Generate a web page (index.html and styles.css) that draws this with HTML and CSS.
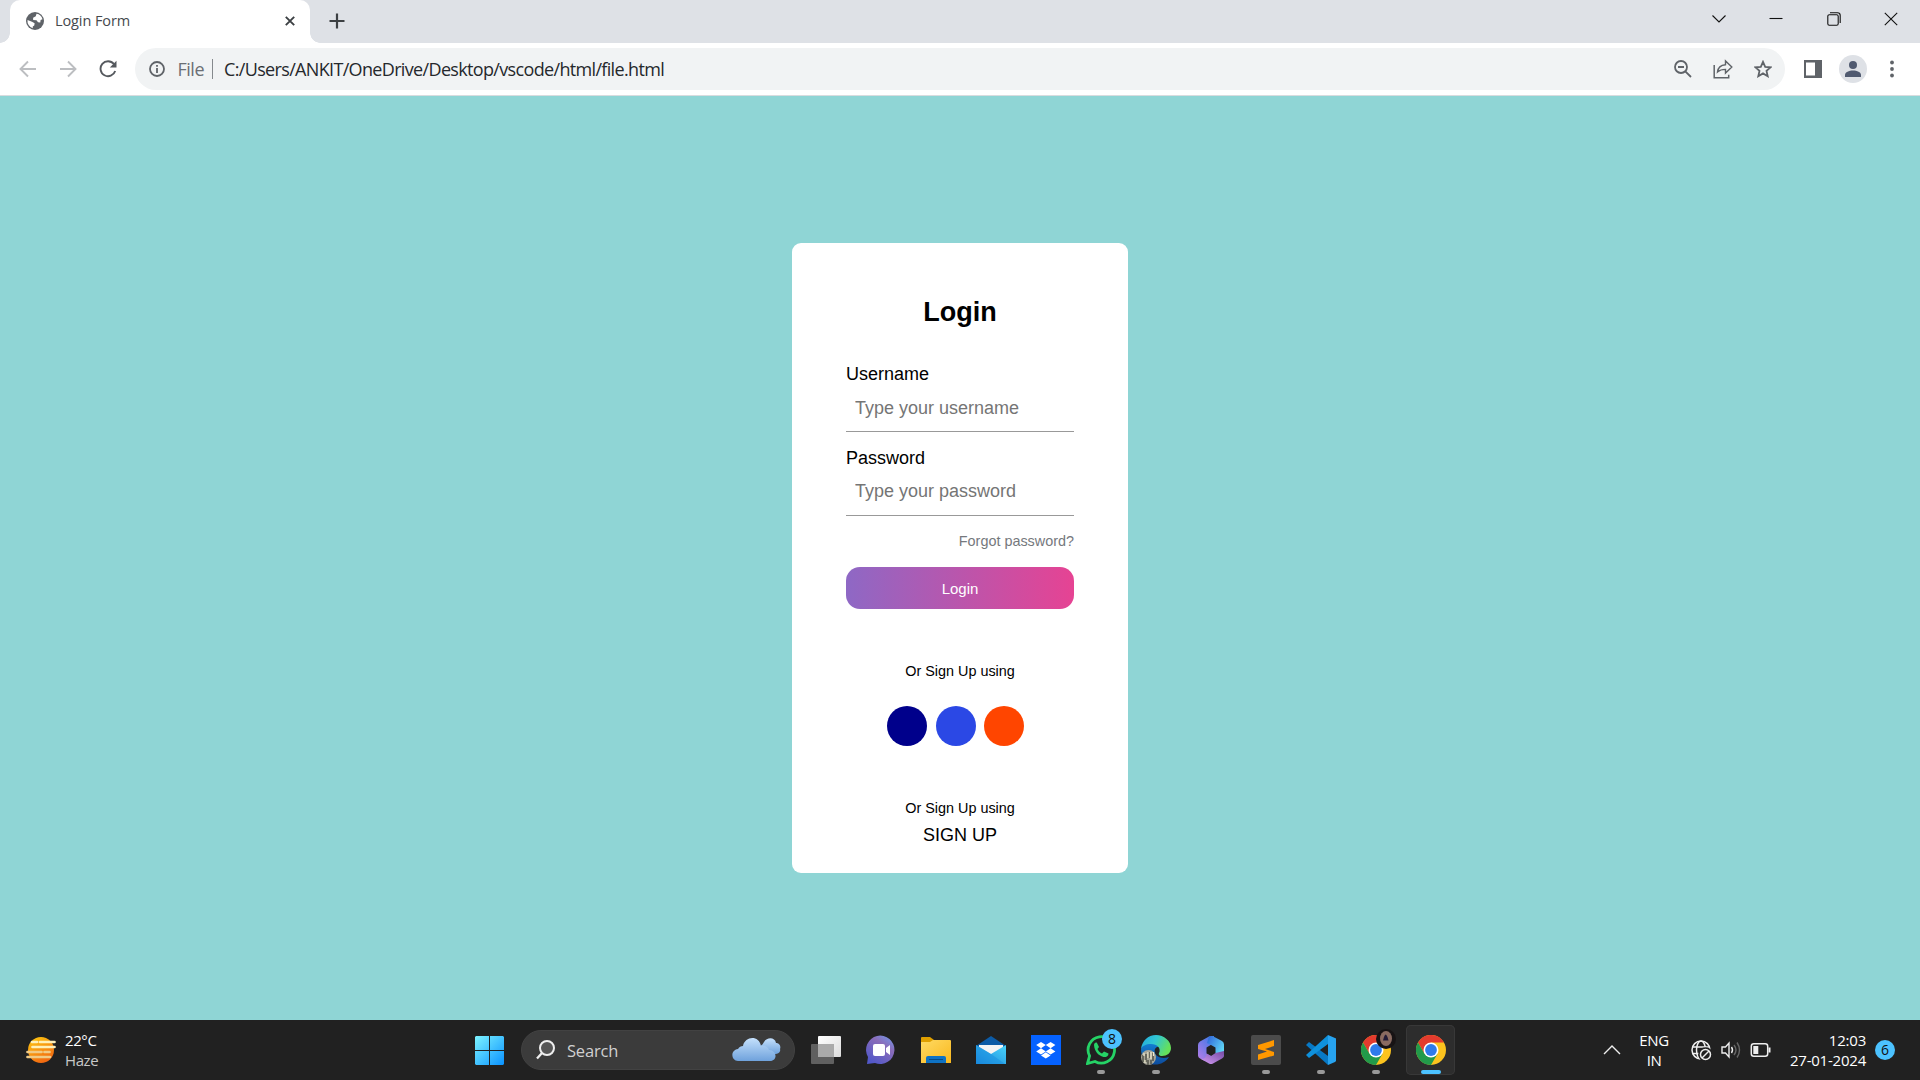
FILE: index.html
```html
<!DOCTYPE html>
<html lang="en">
<head>
<meta charset="utf-8">
<title>Login Form</title>
<link rel="stylesheet" href="styles.css">
</head>
<body>
<svg class="defs" width="0" height="0">
  <defs>
    <linearGradient id="win" x1="0" y1="0" x2="1" y2="1"><stop offset="0" stop-color="#7df4ff"/><stop offset="1" stop-color="#0a92ff"/></linearGradient>
    <linearGradient id="sun" x1="0" y1="0" x2=".5" y2="1"><stop offset="0" stop-color="#ffcd10"/><stop offset="1" stop-color="#f26a11"/></linearGradient>
    <linearGradient id="cloud" x1="0" y1="0" x2="0" y2="1"><stop offset="0" stop-color="#c4e0fc"/><stop offset="1" stop-color="#6fa2dc"/></linearGradient>
    <linearGradient id="chat" x1="1" y1="0" x2=".3" y2="1"><stop offset="0" stop-color="#6f9ef0"/><stop offset=".4" stop-color="#8a6cb9"/><stop offset="1" stop-color="#5258c9"/></linearGradient>
    <linearGradient id="folder" x1="0" y1="0" x2="1" y2="1"><stop offset="0" stop-color="#ffda63"/><stop offset="1" stop-color="#f9b81e"/></linearGradient>
    <linearGradient id="mail" x1="0" y1="1" x2="1" y2="0"><stop offset="0" stop-color="#1a85da"/><stop offset="1" stop-color="#49d5fb"/></linearGradient>
    <linearGradient id="edgeTop" x1="0" y1="0" x2="1" y2=".4"><stop offset="0" stop-color="#21a8e0"/><stop offset=".5" stop-color="#31c6d3"/><stop offset="1" stop-color="#65e05a"/></linearGradient>
    <linearGradient id="edgeLow" x1="0" y1="0" x2="0" y2="1"><stop offset="0" stop-color="#1383d8"/><stop offset="1" stop-color="#0d4b9c"/></linearGradient>
    <linearGradient id="m1" x1=".8" y1="0" x2="0" y2="1"><stop offset="0" stop-color="#3f7ae6"/><stop offset="1" stop-color="#ba7ce8"/></linearGradient>
    <linearGradient id="m2" x1="0" y1="0" x2="1" y2=".7"><stop offset="0" stop-color="#2d60d8"/><stop offset="1" stop-color="#62dcf7"/></linearGradient>
    <linearGradient id="m3" x1="0" y1="1" x2="1" y2="0"><stop offset="0" stop-color="#d39bf3"/><stop offset="1" stop-color="#744aa4"/></linearGradient>
    <linearGradient id="pane" x1="0" y1="0" x2="1" y2="1"><stop offset="0" stop-color="#fff"/><stop offset="1" stop-color="#dcdcdc"/></linearGradient>
    <symbol id="chrome" viewBox="0 0 30 30">
      <circle cx="15" cy="15" r="15" fill="#fcc31e"/>
      <path d="M15 15 8.5 18.8 2 7.5A15 15 0 0 1 28 7.5H15z" fill="#e33b2e"/>
      <path d="M2 7.5A15 15 0 0 0 15 30L21.5 18.8 15 15 8.5 18.8z" fill="#229a4a"/>
      <circle cx="15" cy="15" r="7.5" fill="#fff"/><circle cx="15" cy="15" r="5.9" fill="#2f7bea"/>
    </symbol>
  </defs>
</svg>

<header class="tabstrip">
  <div class="tab">
    <svg class="favicon" viewBox="0 0 24 24"><circle cx="12" cy="12" r="12" fill="#5f6368"/><path d="M14 2.4 13 5.5 9.5 7.5v3L14 11l2 2.5 3 .5.5-3.5L22 9.5A10 10 0 0 0 14 2.4M2 10.5 8 13l3.500 2-.5 3-2 1.200v2.300A10.300 10.300 0 0 1 2 10.500" fill="#fff"/></svg>
    <span class="tab-title">Login Form</span>
    <svg class="tab-close" viewBox="0 0 10 10"><path d="M.8.8l8.400 8.400M9.200.8.8 9.200" stroke="#3c4043" stroke-width="1.900"/></svg>
  </div>
  <svg class="new-tab" viewBox="0 0 16 16"><path d="M8 .5v15M.5 8h15" stroke="#3c4043" stroke-width="2.200"/></svg>
  <div class="window-controls">
    <svg width="14" height="14" viewBox="0 0 14 14"><path d="m.5 3.500 6.500 6.500 6.500-6.500"/></svg>
    <svg width="14" height="14" viewBox="0 0 14 14"><path d="M.5 6.500h13"/></svg>
    <svg width="14" height="14" viewBox="0 0 14 14"><rect x=".8" y="2.800" width="10.400" height="10.400" rx="1.500"/><path d="M3 .8h7.500a2.700 2.700 0 0 1 2.700 2.700V11"/></svg>
    <svg width="14" height="14" viewBox="0 0 14 14"><path d="m.8.8 12.400 12.400M13.200.8.8 13.200"/></svg>
  </div>
</header>

<nav class="toolbar">
  <div class="nav-buttons">
    <svg width="18" height="18" viewBox="0 0 18 18" stroke="#bcbec1"><path d="M17 9H2M9 1.500 1.500 9 9 16.500"/></svg>
    <svg width="18" height="18" viewBox="0 0 18 18" stroke="#bcbec1"><path d="M1 9h15M9 1.500 16.500 9 9 16.500"/></svg>
    <svg width="18" height="18" viewBox="0 0 18 18" stroke="#55595e"><path d="M14.900 4A7.500 7.500 0 1 0 16.200 11"/><path d="M17.500.8v6.700h-6.700z" fill="#55595e" stroke="none"/></svg>
  </div>
  <div class="omnibox">
    <svg class="info" width="16" height="16" viewBox="0 0 16 16"><circle cx="8" cy="8" r="7" fill="none" stroke="#5f6368" stroke-width="1.800"/><path d="M8 7v5M8 4v1.800" stroke="#5f6368" stroke-width="1.800"/></svg>
    <span class="scheme">File</span>
    <span class="divider"></span>
    <span class="url">C:/Users/ANKIT/OneDrive/Desktop/vscode/html/file.html</span>
    <div class="omni-actions">
      <svg width="18" height="18" viewBox="0 0 18 18"><circle cx="7" cy="7" r="6"/><path d="m11.300 11.300 5.700 5.700M4 7h6"/></svg>
      <svg width="20" height="20" viewBox="0 0 20 20"><path d="M1.200 6v12.700h14.500v-3" stroke-width="1.500"/><path d="M4.500 13c.5-4.500 3.500-7 8-7.300V2l6.300 6-6.300 6v-3.600c-3.500 0-6 .8-8 2.600z" stroke-width="1.400"/></svg>
      <svg width="18" height="18" viewBox="0 0 18 18"><path d="m9 1.800 2.200 5 5.300.5-4 3.600 1.200 5.300L9 13.400l-4.700 2.800 1.200-5.300-4-3.600 5.300-.5z"/></svg>
    </div>
  </div>
  <svg class="sidepanel" width="18" height="18" viewBox="0 0 18 18"><path fill-rule="evenodd" d="M0 0h18v18H0zM2 2.500h9v13H2z" fill="#5f6368"/></svg>
  <svg class="profile" width="28" height="28" viewBox="0 0 28 28"><circle cx="14" cy="14" r="14" fill="#dee1e6"/><circle cx="14" cy="10" r="4" fill="#505a70"/><path d="M6 22v-2c0-3 4-4.500 8-4.500s8 1.500 8 4.500v2z" fill="#505a70"/></svg>
  <svg class="menu" width="4" height="18" viewBox="0 0 4 18" fill="#5f6368"><circle cx="2" cy="2.500" r="1.900"/><circle cx="2" cy="9" r="1.900"/><circle cx="2" cy="15.500" r="1.900"/></svg>
</nav>

<main class="page">
  <form class="card">
    <h1>Login</h1>
    <label for="user">Username</label>
    <input id="user" type="text" placeholder="Type your username">
    <label for="pass">Password</label>
    <input id="pass" type="password" placeholder="Type your password">
    <a class="forgot">Forgot password?</a>
    <button type="button">Login</button>
    <p class="social-label">Or Sign Up using</p>
    <div class="social"><span class="dot navy"></span><span class="dot blue"></span><span class="dot orange"></span></div>
    <p class="signup-label">Or Sign Up using</p>
    <a class="signup">SIGN UP</a>
  </form>
</main>

<footer class="taskbar">
  <div class="weather">
    <svg width="30" height="28" viewBox="0 0 30 28"><circle cx="15" cy="14" r="13" fill="url(#sun)"/><g stroke-width="2.700" stroke-linecap="round"><path d="M6 6h5M14 6h14.500M6.500 11h22" stroke="#fff0b8"/><path d="M1.500 16h14M18.500 16h5M1.500 21h22.500" stroke="#f0ca85"/></g></svg>
    <div class="lines"><span>22°C</span><span class="dim">Haze</span></div>
  </div>

  <div class="apps">
    <svg class="start" width="29" height="29" viewBox="0 0 29 29"><path fill="url(#win)" d="M1 0h13v14H0V1zM15 0h13l1 1v13H15zM0 15h14v14H1l-1-1zM15 15h14v13l-1 1H15z"/></svg>
    <div class="search">
      <svg width="19" height="20" viewBox="0 0 19 20"><circle cx="11" cy="8" r="7" fill="#555" stroke="#eee" stroke-width="2"/><path d="m6 13-5 5.500" stroke="#eee" stroke-width="2.300"/></svg>
      <span>Search</span>
      <svg class="cloud" width="49" height="24" viewBox="0 0 49 24"><path d="M28 14V8c2-1 3-2 4-4 3-5 11-5 12 1 4 0 5 4 4 6 1 3-2 5-5 5z" fill="url(#cloud)"/><path d="M6 23C-1 23-2 12 6 11c1-2 3-3 5-3 2-10 16-11 18 0 4-1 7 1 8 4 8 0 9 11 1 11z" fill="url(#cloud)"/></svg>
    </div>
    <div class="app"><svg width="30" height="30" viewBox="0 0 30 30"><rect x="0" y="9" width="23" height="20" rx="1" fill="#606060"/><rect x="7" y="1" width="23" height="21" rx="1" fill="url(#pane)"/><path d="M7 9h16v13H7z" fill="#aaa"/></svg></div>
    <div class="app"><svg width="30" height="30" viewBox="0 0 30 30"><path d="M1 29 2 22A14.200 14.200 0 1 1 9 28z" fill="url(#chat)"/><rect x="7" y="9" width="12" height="12" rx="2" fill="#fff"/><path d="m20 13 4-3v10l-4-3z" fill="#fff"/></svg></div>
    <div class="app"><svg width="30" height="30" viewBox="0 0 30 30"><path d="M0 3q0-1 1-1h8l4 3v5H0z" fill="#e0a000"/><path d="M0 7h9l3-2h17q1 0 1 1v22H0z" fill="url(#folder)"/><path d="M5 28v-5q0-2 2-2h16q2 0 2 2v5z" fill="#0e72c4"/><path d="M8 24.500h14" stroke="#064b87"/></svg></div>
    <div class="app"><svg width="30" height="30" viewBox="0 0 30 30"><path d="M0 11 15 1l15 10v8H0z" fill="#0c5ba6"/><path d="M3 10h24v8L15 23 3 18z" fill="#f4f4f4"/><path d="m0 10 15 9 15-9v19H0z" fill="url(#mail)"/><path d="M15 19 0 10v19h29z" fill="#188ee0" opacity=".5"/></svg></div>
    <div class="app"><svg width="30" height="30" viewBox="0 0 30 30"><path fill="#0562ff" d="M0 0h30v30H0z"/><path fill="#fff" d="m10 7 4.800 3.100L10 13.200l-4.800-3.100zM19.600 7l4.800 3.100-4.800 3.100-4.800-3.100zM10 13.300l4.800 3.100L10 19.500l-4.800-3.100zM19.600 13.300l4.800 3.100-4.800 3.100-4.800-3.100zM14.800 17.300l4.800 3.100-4.800 3.100-4.800-3.100z"/></svg></div>
    <div class="app running"><svg width="30" height="30" viewBox="0 0 30 30"><path d="M1.500 28.500 3.600 21A13.200 13.200 0 1 1 9 26.500z" fill="none" stroke="#25d366" stroke-width="2.800"/><path d="M8 10c0-2 2-3 3-2l2 4-1.500 2c1 2.300 2.500 3.500 4.500 4.500l2-2 4.500 2c0 3-3 4-5 3.500C12 20.500 8.500 16 8 10z" fill="#25d366"/></svg><span class="badge">8</span></div>
    <div class="app running"><svg width="30" height="30" viewBox="0 0 30 30"><path d="M0 14C2 6 13 4 18 9l1 3c-5-1-7 4-4 8 3 3 8 4 13 2-4 6-11 9-18 7C4 27 0 22 0 14z" fill="url(#edgeLow)"/><path d="M0 14C1 6 7 0 15 0s15 6 15 13c0 5-4 8-9 8-3 0-4-2-2.500-4 1-4-2-8-8.500-8-5 0-9 2-10 5z" fill="url(#edgeTop)"/><circle cx="7.500" cy="22.500" r="7.500" fill="#a7a699"/><path d="M2 20v7M5 19v8M8 17v6M12 18v8M7 25v5M10 25v4" stroke="#45473e" stroke-width="1.300"/><path d="M3 18v3M7 17v6M10 17v7M4 25v3M12.500 17v4" stroke="#eee9cd" stroke-width="1.200"/></svg></div>
    <div class="app"><svg width="30" height="30" viewBox="0 0 30 30"><path d="M13 1.500 4 6.500Q2 7.700 2 10v10.500q0 2 2 3L9 26l6-5-4.500-2.500v-6L18 8V1z" fill="url(#m1)"/><path d="M13 1.500q2-1 4-.3L26 6q2 1 2 3.500v12l-8.500-3.500v-5.500L15 10l-4-2z" fill="url(#m2)"/><path d="M5 24q5.500 0 5.500-5.500L15 21l4.500-3L28 16v4.500q0 2-2 3l-9 5q-2 1-4 0z" fill="url(#m3)"/></svg></div>
    <div class="app running"><svg width="30" height="30" viewBox="0 0 30 30"><rect width="30" height="30" rx="2" fill="#4b4b4b"/><path fill="#ff9800" d="m7 10 16-5v6l-9 3 9 3v3.500L7 25v-5.500l9-3L7 14z"/></svg></div>
    <div class="app running"><svg width="30" height="30" viewBox="0 0 30 30"><path d="m0 10 3-3 19 14v9z" fill="#0879c5"/><path d="m0 20 3 3L22 9V0z" fill="#0f91dc"/><path d="m22 0 7 3q1 0 1 1v22l-1 1-7 3z" fill="#27a3ef"/></svg></div>
    <div class="app running"><svg width="30" height="30"><use href="#chrome"/></svg><svg class="avatar" width="20" height="20" viewBox="0 0 20 20"><circle cx="10" cy="10" r="10" fill="#171314"/><ellipse cx="10" cy="9.500" rx="6" ry="7.500" fill="#8a6b61"/><path d="M8 8q1.500-5 3.500 0l1 3.500H7z" fill="#231c38"/></svg></div>
    <div class="app active"><svg width="30" height="30"><use href="#chrome"/></svg></div>
  </div>

  <div class="tray">
    <svg width="18" height="10" viewBox="0 0 18 10"><path d="m1 9 8-8 8 8" fill="none" stroke="#eee" stroke-width="1.400"/></svg>
    <div class="lines lang"><span>ENG</span><span>IN</span></div>
    <div class="status">
      <svg width="21" height="21" viewBox="0 0 21 21" fill="none" stroke="#eee" stroke-width="1.500"><circle cx="10" cy="10" r="9"/><ellipse cx="10" cy="10" rx="4.500" ry="9"/><path d="M1.500 7h17M1.500 13.500h17"/><circle cx="14.500" cy="14.500" r="6.500" fill="#202020" stroke="#202020"/><circle cx="14.500" cy="14.500" r="5"/><path d="m11 18 7-7"/></svg>
      <svg width="20" height="18" viewBox="0 0 20 18" fill="none" stroke="#eee" stroke-width="1.400"><path d="M1 6h3.500L8 2v14l-3.500-4H1z"/><path d="M10.500 6q2 3 0 6"/><path d="M13 4q4 5 0 10M16 1.500q5 7.500 0 15" stroke="#666"/></svg>
      <svg width="21" height="14" viewBox="0 0 21 14"><rect x="1.300" y=".8" width="16.400" height="12.400" rx="2.500" fill="none" stroke="#eee" stroke-width="1.500"/><path d="M3.300 3h5v8h-5zM18.500 4.500h2v5h-2z" fill="#eee"/></svg>
    </div>
    <div class="lines clock"><span>12:03</span><span>27-01-2024</span></div>
    <span class="count">6</span>
  </div>
</footer>
</body>
</html>
```
FILE: styles.css
```css
* { box-sizing: border-box; }
body { margin: 0; width: 1920px; height: 1080px; display: flex; flex-direction: column; overflow: hidden; font-family: "Open Sans", "Noto Sans", sans-serif; }
svg { display: block; flex: none; }
.defs { position: absolute; }

.tabstrip { height: 43px; flex: none; display: flex; align-items: center; background: #dee1e6; padding-left: 10px; }
.tab { position: relative; width: 300px; height: 43px; display: flex; align-items: center; padding: 0 15px 1px 16px; background: #fff; border-radius: 10px 10px 0 0; }
.tab::before, .tab::after { content: ""; position: absolute; bottom: 0; width: 10px; height: 10px; }
.tab::before { left: -10px; background: radial-gradient(circle at 0 0, #dee1e6 9.500px, #fff 10px); }
.tab::after { right: -10px; background: radial-gradient(circle at 100% 0, #dee1e6 9.500px, #fff 10px); }
.favicon { width: 18px; height: 18px; }
.tab-title { margin-left: 11px; padding-bottom: 1px; font-size: 14.500px; letter-spacing: -.1px; color: #45494d; white-space: nowrap; }
.tab-close { width: 10px; height: 10px; margin-left: auto; }
.new-tab { width: 16px; height: 16px; margin: 0 0 1px 19px; }
.window-controls { margin-left: auto; display: flex; gap: 43.500px; padding: 0 22px 6px 0; fill: none; stroke: #111; stroke-width: 1.100; }

.toolbar { height: 53px; flex: none; display: flex; align-items: center; padding: 0 26px 0 19px; background: #fff; border-bottom: 1px solid #d9dcdf; }
.nav-buttons { width: 116px; display: flex; gap: 22px; fill: none; stroke-width: 1.900; }
.omnibox { width: 1650px; height: 42px; display: flex; align-items: center; padding: 0 13px 0 14px; border-radius: 21px; background: #f1f3f4; font-size: 18px; white-space: nowrap; }
.scheme { margin-left: 12.500px; padding-bottom: 1px; color: #6b6f74; letter-spacing: -.5px; }
.divider { width: 1px; height: 20px; margin: 0 11px 0 8px; background: #85898d; }
.url { padding-bottom: 1px; color: #25282c; letter-spacing: -.660px; }
.omni-actions { margin-left: auto; display: flex; align-items: center; gap: 21px; fill: none; stroke: #5f6368; stroke-width: 1.800; }
.sidepanel { margin-left: 18.500px; }
.profile { margin-left: 17.500px; }
.menu { margin-left: auto; }

.page { flex: 1; min-height: 0; display: flex; justify-content: center; padding-top: 147px; background: #8fd5d5; font-family: "Liberation Sans", Arial, sans-serif; }
.card { width: 336px; height: 630px; display: flex; flex-direction: column; padding: 54px 54px 0; border-radius: 9px; background: #fff; font-size: 18px; line-height: 20px; color: #000; }
.card h1 { margin: 0 0 36px; text-align: center; font-size: 27px; line-height: 31px; }
.card input { height: 48px; margin: 0 0 16px; padding: 1px 9px 0; border: 0; border-bottom: 1px solid #999; border-radius: 0; background: transparent; outline: 0; font: 18px "Liberation Sans", Arial, sans-serif; }
.card input[type="password"] { padding: 0 9px 1px; }
.card input::placeholder { color: #757575; opacity: 1; }
.forgot { align-self: flex-end; margin-top: 1px; font-size: 14.400px; line-height: 16px; color: #75787d; }
.card button { height: 42px; flex: none; margin-top: 18px; padding: 0; border: 0; border-radius: 14px; background: linear-gradient(90deg, #8e68c5, #e64393); color: #fff; font: 15px "Liberation Sans", Arial, sans-serif; }
.card p { margin: 0; text-align: center; font-size: 14.400px; line-height: 16px; }
.card .social-label { margin-top: 54px; }
.social { display: flex; gap: 8.500px; margin: 27px 0 0 41px; }
.dot { width: 40px; height: 40px; border-radius: 50%; }
.navy { background: #00008b; }
.blue { background: #2b48e5; }
.orange { background: #ff4500; }
.card .signup-label { margin-top: 54px; }
.signup { margin-top: 9px; text-align: center; }

.taskbar { position: relative; height: 60px; flex: none; display: flex; align-items: center; justify-content: space-between; padding: 0 25px 0 26px; background: #212121; color: #fff; }
.weather { width: 449px; display: flex; align-items: center; gap: 9px; }
.lines { display: flex; flex-direction: column; font-size: 15px; line-height: 20px; letter-spacing: -.4px; white-space: nowrap; }
.dim { color: #c8c8c8; }
.apps { display: flex; align-items: center; flex: none; }
.start { margin-right: 17px; }
.search { width: 274px; height: 40px; display: flex; align-items: center; margin-right: 6px; padding: 0 13px 0 14px; border: 1px solid #424242; border-radius: 20px; background: #3b3b3b; color: #d0d0d0; font-size: 16.500px; letter-spacing: -.2px; }
.search span { margin-left: 12px; }
.cloud { margin-left: auto; }
.app { position: relative; width: 49px; height: 50px; margin-right: 6px; display: flex; align-items: center; justify-content: center; border-radius: 5px; }
.running::after, .active::after { content: ""; position: absolute; left: 50%; bottom: 1px; width: 8px; height: 4px; margin-left: -4px; border-radius: 2px; background: #999; }
.active { background: #2d2d2d; box-shadow: inset 0 0 0 1px #383838; }
.active::after { width: 20px; margin-left: -10px; background: #4cc2ff; }
.badge, .count { width: 20px; height: 20px; border-radius: 50%; background: #4cc2ff; color: #111; text-align: center; font-size: 14px; line-height: 20px; }
.badge { position: absolute; left: 26px; top: 4px; }
.avatar { position: absolute; left: 25px; top: 4px; }
.tray { display: flex; align-items: center; margin-left: auto; }
.lang { width: 32px; margin-left: 17px; align-items: center; }
.status { display: flex; align-items: center; gap: 9px; margin-left: 21px; }
.clock { width: 80px; margin-left: 15px; align-items: flex-end; letter-spacing: -.220px; }
.count { margin-left: 9px; }
```
